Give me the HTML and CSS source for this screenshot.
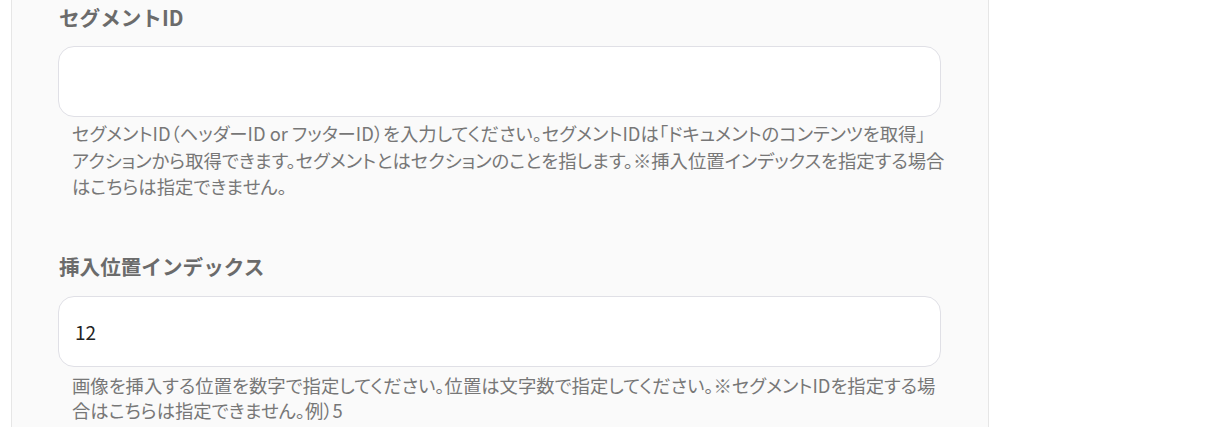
FILE: index.html
```html
<!DOCTYPE html>
<html lang="ja">
<head>
<meta charset="utf-8">
<link rel="stylesheet" href="styles.css">
</head>
<body>
<div class="panel">
  <div class="field field-first">
    <div class="label">セグメントID</div>
    <div class="input"></div>
    <p class="help help-wide">セグメントID（ヘッダーID or フッターID）を入力してください。セグメントIDは「ドキュメントのコンテンツを取得」<span class="nowrap">アクション</span>から取得できます。セグメントとはセクションのことを指します。※挿入位置インデックスを指定する場合はこちらは指定できません。</p>
  </div>
  <div class="field field-second">
    <div class="label">挿入位置インデックス</div>
    <div class="input"><span class="value">12</span></div>
    <p class="help">画像を挿入する位置を数字で指定してください。位置は文字数で指定してください。※セグメントIDを指定する場合はこちらは指定できません。例）5</p>
  </div>
</div>
</body>
</html>
```

FILE: styles.css
```css
html, body {
  margin: 0;
  padding: 0;
  background: #ffffff;
  height: 100%;
}
body {
  font-family: "Noto Sans CJK JP", "Noto Sans", sans-serif;
  overflow: hidden;
}
.panel {
  margin-left: 11px;
  min-height: 427px;
  box-sizing: border-box;
  width: 978px;
  background: #fafafa;
  border-left: 1px solid #e6e6e6;
  border-right: 1px solid #e6e6e6;
  padding: 2px 47px 0 46px;
}
.field {
  display: flex;
  flex-direction: column;
}
.field-second {
  margin-top: 51px;
}
.label {
  font-size: 20.6px;
  line-height: 30px;
  font-weight: 700;
  color: #6b6b6b;
  padding-left: 1px;
}
.input {
  margin-top: 14px;
  height: 71px;
  box-sizing: border-box;
  background: #ffffff;
  border: 1px solid #e0e0e6;
  border-radius: 16px;
  display: flex;
  align-items: center;
  padding-left: 16px;
}
.field-second .input {
  margin-top: 15px;
}
.value {
  font-size: 19px;
  color: #222222;
}
.help {
  margin: 3px 0 0 0;
  padding: 0 0 0 14px;
  width: 872px;
  font-size: 18.35px;
  line-height: 26.5px;
  color: #777777;
  font-feature-settings: "palt";
}
.help-wide {
  width: 880px;
}
.nowrap {
  white-space: nowrap;
}
.field-second .help {
  margin-top: 6px;
  line-height: 25.5px;
}
```
